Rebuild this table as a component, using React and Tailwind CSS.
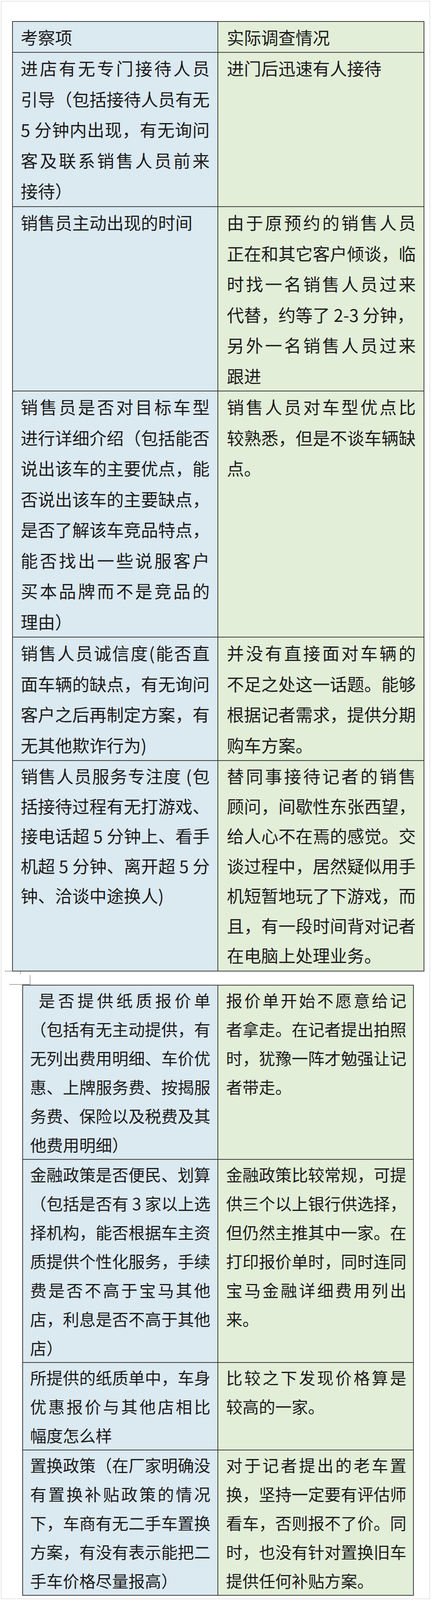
import React from 'react';

// '=' at the start of a line: justify it to the full cell width, '>' : indented + justified
const TABLE_ONE = [
  { h: 'h-[79px]', left: ['考察项'], right: ['实际调查情况'] },
  {
    h: 'h-[395px]',
    left: ['=进店有无专门接待人员', '=引导（包括接待人员有无', '=5 分钟内出现，有无询问', '=客及联系销售人员前来', '接待）'],
    right: ['进门后迅速有人接待'],
  },
  {
    h: 'h-[472px]',
    left: ['销售员主动出现的时间'],
    right: ['=由于原预约的销售人员', '=正在和其它客户倾谈，临', '=时找一名销售人员过来', '代替，约等了 2-3 分钟，', '=另外一名销售人员过来', '跟进'],
  },
  {
    h: 'h-[630px]',
    left: [
      '=销售员是否对目标车型',
      '=进行详细介绍（包括能否',
      '=说出该车的主要优点，能',
      '否说出该车的主要缺点，',
      '是否了解该车竞品特点，',
      '=能否找出一些说服客户',
      '=买本品牌而不是竞品的',
      '理由）',
    ],
    right: ['=销售人员对车型优点比', '=较熟悉，但是不谈车辆缺', '点。'],
  },
  {
    h: 'h-[316px]',
    left: ['=销售人员诚信度(能否直', '=面车辆的缺点，有无询问', '=客户之后再制定方案，有', '无其他欺诈行为)'],
    right: ['=并没有直接面对车辆的', '=不足之处这一话题。能够', '=根据记者需求，提供分期', '购车方案。'],
  },
  {
    h: 'h-[539px]',
    tight: true,
    left: ['=销售人员服务专注度 (包', '括接待过程有无打游戏、', '=接电话超 5 分钟上、看手', '=机超 5 分钟、离开超 5 分', '钟、洽谈中途换人)'],
    right: [
      '=替同事接待记者的销售',
      '顾问，间歇性东张西望，',
      '=给人心不在焉的感觉。交',
      '=谈过程中，居然疑似用手',
      '=机短暂地玩了下游戏，而',
      '=且，有一段时间背对记者',
      '在电脑上处理业务。',
    ],
  },
];

const TABLE_TWO = [
  {
    h: 'h-[446px]',
    left: ['>是否提供纸质报价单', '=（包括有无主动提供，有', '=无列出费用明细、车价优', '=惠、上牌服务费、按揭服', '=务费、保险以及税费及其', '他费用明细）'],
    right: ['=报价单开始不愿意给记', '=者拿走。在记者提出拍照', '=时，犹豫一阵才勉强让记', '者带走。'],
  },
  {
    h: 'h-[520px]',
    left: [
      '=金融政策是否便民、划算',
      '=（包括是否有 3 家以上选',
      '=择机构，能否根据车主资',
      '=质提供个性化服务，手续',
      '=费是否不高于宝马其他',
      '=店，利息是否不高于其他',
      '店）',
    ],
    right: ['=金融政策比较常规，可提', '=供三个以上银行供选择，', '=但仍然主推其中一家。在', '=打印报价单时，同时连同', '=宝马金融详细费用列出', '来。'],
  },
  {
    h: 'h-[224px]',
    left: ['=所提供的纸质单中，车身', '=优惠报价与其他店相比', '幅度怎么样'],
    right: ['=比较之下发现价格算是', '较高的一家。'],
  },
  {
    h: 'h-[372px]',
    left: ['=置换政策（在厂家明确没', '=有置换补贴政策的情况', '=下，车商有无二手车置换', '=方案，有没有表示能把二', '手车价格尽量报高）'],
    right: ['=对于记者提出的老车置', '=换，坚持一定要有评估师', '=看车，否则报不了价。同', '=时，也没有针对置换旧车', '提供任何补贴方案。'],
  },
];

const Line = ({ text }) => {
  if (text.startsWith('>')) {
    return <div className="whitespace-nowrap pl-[22px] text-justify [text-align-last:justify]">{text.slice(1)}</div>;
  }
  if (text.startsWith('=')) {
    return <div className="whitespace-nowrap text-justify [text-align-last:justify]">{text.slice(1)}</div>;
  }
  return <div className="whitespace-nowrap">{text}</div>;
};

const Table = ({ rows, big }) => (
  <div
    className={`border-x-2 border-t-2 border-[#3b3d3b] text-[#1c1c1c] ${
      big ? 'w-[1056px] text-[44px] leading-[78.5px]' : 'w-[1003px] text-[42px] leading-[74px]'
    }`}
  >
    {rows.map((row, i) => (
      <div key={i} className={`flex border-b-2 border-[#3b3d3b] ${row.h} ${row.tight ? 'leading-[76.5px]' : ''}`}>
        <div className={`shrink-0 border-r-2 border-[#3b3d3b] bg-[#dbe9f1] ${big ? 'w-[526px] pl-[20px] pr-[20px]' : 'w-[500px] pl-[18px] pr-[18px]'}`}>
          <div className={big ? 'w-[484px]' : 'w-[462px]'}>
            {row.left.map((t, j) => <Line key={j} text={t} />)}
          </div>
        </div>
        <div className={`flex-1 bg-[#e2eed8] ${big ? 'pl-[22px]' : 'pl-[20px]'}`}>
          <div className={big ? 'w-[484px]' : 'w-[462px]'}>
            {row.right.map((t, j) => <Line key={j} text={t} />)}
          </div>
        </div>
      </div>
    ))}
  </div>
);

export default function App() {
  return (
    <div className="w-[1104px] h-[4096px] bg-white p-[2px] font-['Noto_Sans_CJK_SC','Noto_Sans',sans-serif]">
      <div className="flex h-full flex-col border-2 border-[#e6e6e6]">
        <div className="ml-[27px] mt-[50px]">
          <Table rows={TABLE_ONE} big />
        </div>

        {/* leftover table handle marks between the two tables */}
        <svg width="80" height="36" viewBox="0 0 80 36" className="-mt-[2px] shrink-0">
          <g stroke="#8c8c8c" strokeWidth="1.5" fill="none">
            <line x1="8" y1="1" x2="27" y2="1" />
            <line x1="48" y1="2" x2="48" y2="9" />
            <line x1="73" y1="11" x2="73" y2="36" />
            <line x1="20" y1="35.3" x2="73" y2="35.3" />
          </g>
        </svg>

        <div className="ml-[53px]">
          <Table rows={TABLE_TWO} />
        </div>
      </div>
    </div>
  );
}
